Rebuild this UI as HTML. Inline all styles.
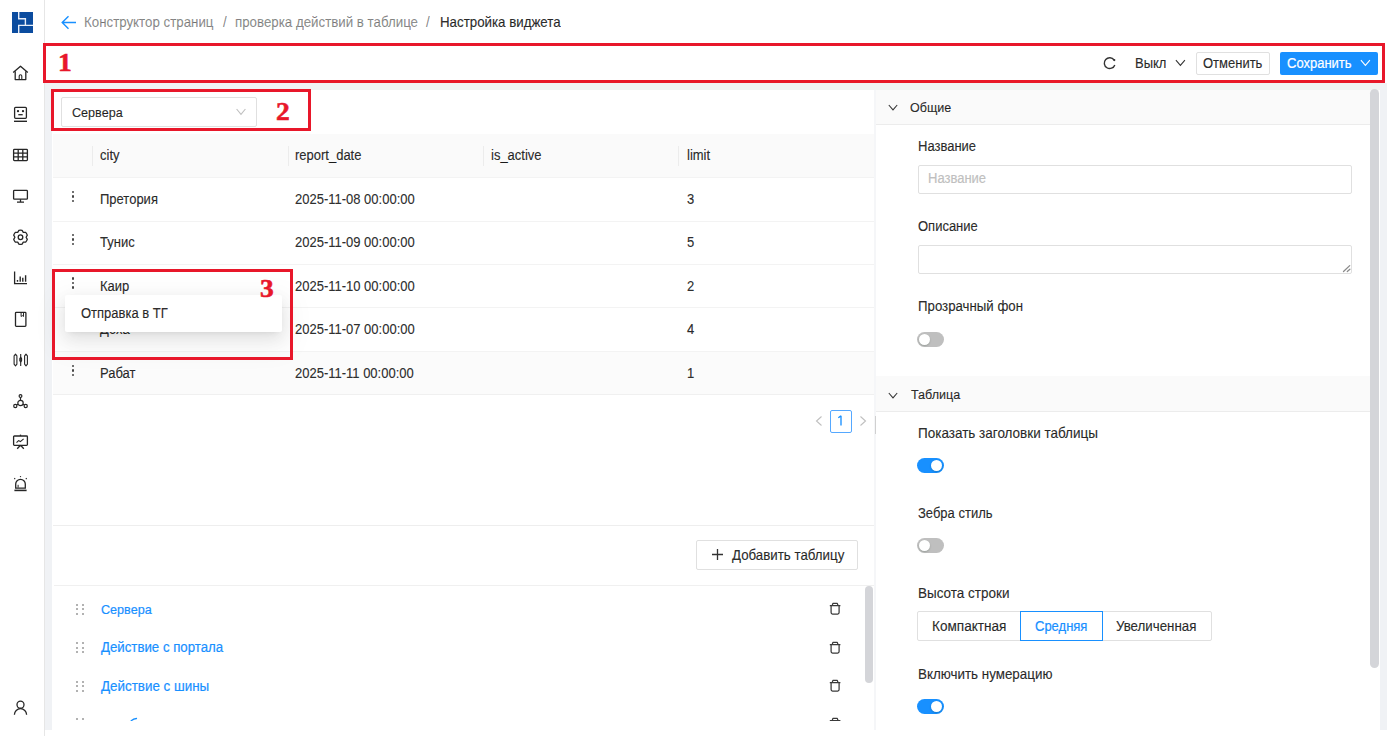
<!DOCTYPE html>
<html><head><meta charset="utf-8">
<style>
*{box-sizing:border-box;margin:0;padding:0}
html,body{width:1387px;height:736px;overflow:hidden;background:#fff;font-family:"Liberation Sans",sans-serif;font-size:13px;color:rgba(0,0,0,.83)}
.abs{position:absolute}
.t{position:absolute;white-space:nowrap;line-height:13px;font-size:13px;-webkit-text-stroke:0.2px currentColor}
.redbox{position:absolute;border:3px solid #e8172a}
.num{position:absolute;font-family:"Liberation Serif",serif;font-weight:bold;color:#e8172a;font-size:25px;line-height:25px;transform:scaleX(1.1);transform-origin:0 0;-webkit-text-stroke:0.55px #e8172a}
.dots{position:absolute;width:3px;height:12px}
.dots i{position:absolute;left:0;width:2.5px;height:2.5px;border-radius:50%;background:#444}
.sw{position:absolute;left:917px;width:26.5px;height:15px;border-radius:8px;background:#bfbfbf}
.sw i{position:absolute;top:2px;left:2px;width:11px;height:11px;border-radius:50%;background:#fff;box-shadow:0 1px 2px rgba(0,35,11,.2)}
.sw.on{background:#1890ff}
.sw.on i{left:13.5px}
</style></head><body>
<div class="abs" style="left:0;top:0;width:44px;height:736px;background:#fff"></div>
<div class="abs" style="left:44px;top:0;width:1px;height:736px;background:#e6e6e6"></div>
<svg class="abs" style="left:12px;top:12px" width="21" height="21" viewBox="0 0 21 21">
<rect x="0" y="0" width="21" height="21" fill="#0b4c9f"/>
<path d="M6.7 0V6.7H13.4V13.4H21M6.7 21V13.4H13.4" stroke="#e8eef8" stroke-width="1.4" fill="none"/></svg>
<svg class="abs" style="left:12px;top:65px" width="17" height="16" viewBox="0 0 17 16" fill="none" stroke="#262626" stroke-width="1.3" stroke-linejoin="round">
<path d="M1.2 7.6L8.5 1.2L15.8 7.6"/><path d="M3.2 6.2V14.6H13.8V6.2"/><path d="M7.2 14.6V11A1.3 1.3 0 0 1 9.8 11V14.6" stroke-width="1.1"/></svg>
<svg class="abs" style="left:13px;top:106px" width="15" height="17" viewBox="0 0 15 17" fill="none" stroke="#262626" stroke-width="1.3">
<rect x="1.6" y="1.3" width="11.8" height="11" rx="1"/><path d="M1 15.3H14" stroke-width="1.4"/><circle cx="5" cy="5.2" r=".5" fill="#262626"/><circle cx="10" cy="5.2" r=".5" fill="#262626"/><path d="M5.3 8.7H9.7"/></svg>
<svg class="abs" style="left:12px;top:148px" width="17" height="14" viewBox="0 0 17 14" fill="none" stroke="#262626" stroke-width="1.3">
<rect x="1.6" y="1.4" width="13.8" height="11.2" rx=".8"/><path d="M6.2 1.4V12.6M10.8 1.4V12.6M1.6 5.1H15.4M1.6 8.9H15.4"/></svg>
<svg class="abs" style="left:12px;top:189px" width="17" height="15" viewBox="0 0 17 15" fill="none" stroke="#262626" stroke-width="1.3">
<rect x="1.6" y="1.4" width="13.8" height="8.8" rx=".8"/><path d="M8.5 10.2V13M5 13.2H12"/></svg>
<svg class="abs" style="left:12px;top:229px" width="17" height="17" viewBox="0 0 17 17" fill="none" stroke="#262626" stroke-width="1.3" stroke-linejoin="round">
<path d="M6.90 1.33A7.10 7.10 0 0 1 10.10 1.33L11.30 3.40L13.69 3.41A7.10 7.10 0 0 1 15.29 6.17L14.10 8.25L15.29 10.33A7.10 7.10 0 0 1 13.69 13.09L11.30 13.10L10.10 15.17A7.10 7.10 0 0 1 6.90 15.17L5.70 13.10L3.31 13.09A7.10 7.10 0 0 1 1.71 10.33L2.90 8.25L1.71 6.17A7.10 7.10 0 0 1 3.31 3.41L5.70 3.40Z"/><circle cx="8.5" cy="8.25" r="2.3"/></svg>
<svg class="abs" style="left:13px;top:271px" width="15" height="14" viewBox="0 0 15 14" fill="none" stroke="#262626" stroke-width="1.3">
<path d="M1.6 0.6V12.6H14"/><path d="M4.5 10.8V9M7.2 10.8V5.6M9.8 10.8V6.8M12.6 10.8V4.2" stroke-width="1.4"/></svg>
<svg class="abs" style="left:14px;top:311px" width="13" height="17" viewBox="0 0 13 17" fill="none" stroke="#262626" stroke-width="1.3">
<rect x="1.5" y="1.3" width="10.4" height="14" rx=".8"/><path d="M7.1 1.3V5.5L8.3 4.6L9.5 5.5V1.3" stroke-width="1"/></svg>
<svg class="abs" style="left:13px;top:353px" width="16" height="14" viewBox="0 0 16 14" fill="none" stroke="#262626" stroke-width="1.1" stroke-linejoin="round">
<path d="M2.5 1.2L3.9 2.8V11.2L2.5 12.8L1.1 11.2V2.8Z"/><path d="M7.7 1V13" /><path d="M7.7 4.2L8.6 5.6V7.6L7.7 9L6.8 7.6V5.6Z"/><path d="M13 1.2L14.4 2.8V11.2L13 12.8L11.6 11.2V2.8Z"/></svg>
<svg class="abs" style="left:12px;top:393px" width="17" height="17" viewBox="0 0 17 17" fill="none" stroke="#262626" stroke-width="1.2">
<circle cx="8.5" cy="3.1" r="1.4"/><circle cx="8.5" cy="10" r="2.7"/><path d="M8.5 4.5V7.3"/><path d="M6.1 11.3L4.7 12.1M10.9 11.3L12.3 12.1"/><circle cx="3.3" cy="13" r="1.6"/><circle cx="13.7" cy="13" r="1.6"/></svg>
<svg class="abs" style="left:12px;top:434px" width="17" height="16" viewBox="0 0 17 16" fill="none" stroke="#262626" stroke-width="1.3">
<rect x="1.6" y="2" width="13.8" height="9.3" rx=".8"/><path d="M8.5 0.6V2"/><path d="M4.5 8.6L6.6 6.6L8.4 7.6L11.6 4.8" stroke-width="1.1"/><path d="M8.5 11.3L5.2 14.8M8.5 11.3L11.8 14.8"/></svg>
<svg class="abs" style="left:13px;top:475px" width="15" height="17" viewBox="0 0 15 17" fill="none" stroke="#262626" stroke-width="1.3">
<path d="M2.7 13.1V9.1A4.8 4.8 0 0 1 12.3 9.1V13.1Z"/><path d="M1.4 15.4H13.6" stroke-width="1.6"/><path d="M5.1 12.6V9.8" stroke-width="1"/><circle cx="7.5" cy="1.6" r=".7" fill="#262626" stroke="none"/><path d="M1.3 3.2L2.2 4.1M13.7 3.2L12.8 4.1" stroke-width="1.1"/></svg>
<svg class="abs" style="left:13px;top:700px" width="15" height="16" viewBox="0 0 15 16" fill="none" stroke="#262626" stroke-width="1.3">
<circle cx="7.5" cy="4.7" r="3.5"/><path d="M1.4 14.8A6.1 6.1 0 0 1 13.6 14.8"/></svg>

<svg class="abs" style="left:61px;top:15px" width="16" height="15" viewBox="0 0 16 15"><path d="M15 7.5H1.5M7.5 1.2L1.2 7.5L7.5 13.8" stroke="#1890ff" stroke-width="1.4" fill="none"/></svg>
<div class="t" style="left:83.5px;top:16.00px;font-size:14.30px;transform:scaleX(0.9302);transform-origin:0 0;color:rgba(0,0,0,.45)">Конструктор страниц</div>
<div class="t" style="left:223px;top:16.00px;font-size:14.30px;transform:scaleX(0.9302);transform-origin:0 0;color:rgba(0,0,0,.45)">/</div>
<div class="t" style="left:235px;top:16.00px;font-size:14.30px;transform:scaleX(0.9302);transform-origin:0 0;color:rgba(0,0,0,.45)">проверка действий в таблице</div>
<div class="t" style="left:426px;top:16.00px;font-size:14.30px;transform:scaleX(0.9302);transform-origin:0 0;color:rgba(0,0,0,.45)">/</div>
<div class="t" style="left:439.5px;top:16.00px;font-size:14.30px;transform:scaleX(0.9302);transform-origin:0 0;">Настройка виджета</div>
<svg class="abs" style="left:1100px;top:53px" width="20" height="20" viewBox="0 0 20 20"><path d="M14.1 7.0A5.4 5.4 0 1 0 14.8 11.9" stroke="#333" stroke-width="1.4" fill="none"/><circle cx="14.3" cy="7.1" r="1.1" fill="#333"/></svg>
<div class="t" style="left:1134.5px;top:57.00px;font-size:13.97px;transform:scaleX(0.9302);transform-origin:0 0;">Выкл</div>
<svg class="abs" style="left:1175px;top:59px" width="11" height="8" viewBox="0 0 11 8"><path d="M0.9 1.2L5.4 6.4L9.9 1.2" stroke="#333" stroke-width="1.05" fill="none"/></svg>
<div class="abs" style="left:1196px;top:52px;width:74px;height:23px;border:1px solid #e0e0e0;border-radius:2px;background:#fff"></div>
<div class="t" style="left:1203px;top:57.00px;font-size:13.97px;transform:scaleX(0.9302);transform-origin:0 0;">Отменить</div>
<div class="abs" style="left:1280px;top:52px;width:98px;height:22.5px;background:#1890ff;border-radius:2px"></div>
<div class="t" style="left:1287px;top:57.00px;font-size:13.97px;transform:scaleX(0.9302);transform-origin:0 0;color:#fff">Сохранить</div>
<svg class="abs" style="left:1360px;top:59px" width="11" height="8" viewBox="0 0 11 8"><path d="M0.9 1.2L5.4 6.4L9.9 1.2" stroke="#fff" stroke-width="1.05" fill="none"/></svg>
<div class="abs" style="left:45px;top:83px;width:1342px;height:647px;background:#f0f2f5"></div>
<div class="abs" style="left:52px;top:89.5px;width:822px;height:640.5px;background:#fff"></div>
<div class="abs" style="left:876px;top:89.5px;width:504px;height:640.5px;background:#fff"></div>
<div class="abs" style="left:61px;top:97px;width:195.5px;height:29.5px;border:1px solid #e0e0e0;border-radius:2px"></div>
<div class="t" style="left:72px;top:106.00px;font-size:13.54px;transform:scaleX(0.9302);transform-origin:0 0;">Сервера</div>
<svg class="abs" style="left:235.5px;top:107.5px" width="10" height="8" viewBox="0 0 10 8"><path d="M0.6 1L5 6.3L9.4 1" stroke="#bfbfbf" stroke-width="1.1" fill="none"/></svg>
<div class="abs" style="left:53px;top:133.6px;width:821px;height:43.6px;background:#fafafa"></div>
<div class="abs" style="left:92px;top:145.5px;width:1px;height:20px;background:#ececec"></div>
<div class="abs" style="left:287.5px;top:145.5px;width:1px;height:20px;background:#ececec"></div>
<div class="abs" style="left:483px;top:145.5px;width:1px;height:20px;background:#ececec"></div>
<div class="abs" style="left:678px;top:145.5px;width:1px;height:20px;background:#ececec"></div>
<div class="t" style="left:100px;top:149.00px;font-size:13.97px;transform:scaleX(0.9302);transform-origin:0 0;">city</div>
<div class="t" style="left:295px;top:149.00px;font-size:13.97px;transform:scaleX(0.9302);transform-origin:0 0;">report_date</div>
<div class="t" style="left:491px;top:149.00px;font-size:13.97px;transform:scaleX(0.9302);transform-origin:0 0;">is_active</div>
<div class="t" style="left:687px;top:149.00px;font-size:13.97px;transform:scaleX(0.9302);transform-origin:0 0;">limit</div>
<div class="abs" style="left:53px;top:177.2px;width:821px;height:1px;background:#f3f3f3"></div>
<div class="abs dots" style="left:71.5px;top:190.5px"><i style="top:0"></i><i style="top:4.5px"></i><i style="top:9px"></i></div>
<div class="t" style="left:100px;top:193.00px;font-size:13.97px;transform:scaleX(0.9302);transform-origin:0 0;">Претория</div>
<div class="t" style="left:295px;top:193.00px;font-size:13.97px;transform:scaleX(0.9302);transform-origin:0 0;">2025-11-08 00:00:00</div>
<div class="t" style="left:687px;top:193.00px;font-size:13.97px;transform:scaleX(0.9302);transform-origin:0 0;">3</div>
<div class="abs" style="left:53px;top:220.6px;width:821px;height:1px;background:#f3f3f3"></div>
<div class="abs dots" style="left:71.5px;top:233.9px"><i style="top:0"></i><i style="top:4.5px"></i><i style="top:9px"></i></div>
<div class="t" style="left:100px;top:236.00px;font-size:13.97px;transform:scaleX(0.9302);transform-origin:0 0;">Тунис</div>
<div class="t" style="left:295px;top:236.00px;font-size:13.97px;transform:scaleX(0.9302);transform-origin:0 0;">2025-11-09 00:00:00</div>
<div class="t" style="left:687px;top:236.00px;font-size:13.97px;transform:scaleX(0.9302);transform-origin:0 0;">5</div>
<div class="abs" style="left:53px;top:264.0px;width:821px;height:1px;background:#f3f3f3"></div>
<div class="abs dots" style="left:71.5px;top:277.3px"><i style="top:0"></i><i style="top:4.5px"></i><i style="top:9px"></i></div>
<div class="t" style="left:100px;top:280.00px;font-size:13.97px;transform:scaleX(0.9302);transform-origin:0 0;">Каир</div>
<div class="t" style="left:295px;top:280.00px;font-size:13.97px;transform:scaleX(0.9302);transform-origin:0 0;">2025-11-10 00:00:00</div>
<div class="t" style="left:687px;top:280.00px;font-size:13.97px;transform:scaleX(0.9302);transform-origin:0 0;">2</div>
<div class="abs" style="left:53px;top:307.4px;width:821px;height:1px;background:#f3f3f3"></div>
<div class="abs dots" style="left:71.5px;top:320.7px"><i style="top:0"></i><i style="top:4.5px"></i><i style="top:9px"></i></div>
<div class="t" style="left:100px;top:323.00px;font-size:13.97px;transform:scaleX(0.9302);transform-origin:0 0;">Доха</div>
<div class="t" style="left:295px;top:323.00px;font-size:13.97px;transform:scaleX(0.9302);transform-origin:0 0;">2025-11-07 00:00:00</div>
<div class="t" style="left:687px;top:323.00px;font-size:13.97px;transform:scaleX(0.9302);transform-origin:0 0;">4</div>
<div class="abs" style="left:53px;top:351.8px;width:821px;height:43.4px;background:#fbfbfb"></div>
<div class="abs" style="left:53px;top:350.8px;width:821px;height:1px;background:#f3f3f3"></div>
<div class="abs dots" style="left:71.5px;top:364.7px"><i style="top:0"></i><i style="top:4.5px"></i><i style="top:9px"></i></div>
<div class="t" style="left:100px;top:367.00px;font-size:13.97px;transform:scaleX(0.9302);transform-origin:0 0;">Рабат</div>
<div class="t" style="left:295px;top:367.00px;font-size:13.97px;transform:scaleX(0.9302);transform-origin:0 0;">2025-11-11 00:00:00</div>
<div class="t" style="left:687px;top:367.00px;font-size:13.97px;transform:scaleX(0.9302);transform-origin:0 0;">1</div>
<div class="abs" style="left:53px;top:394.2px;width:821px;height:1px;background:#f0f0f0"></div>
<svg class="abs" style="left:814.5px;top:415.5px" width="8" height="10" viewBox="0 0 8 10"><path d="M6.5 0.5L1.5 5L6.5 9.5" stroke="#bfbfbf" stroke-width="1.1" fill="none"/></svg>
<div class="abs" style="left:829.5px;top:410px;width:22.5px;height:22.5px;border:1px solid #55a8ff;border-radius:2px"></div>
<svg class="abs" style="left:836px;top:415px" width="8" height="11" viewBox="0 0 8 11"><path d="M5 0.8V10.4M5 0.9L2.3 2.8" stroke="#1890ff" stroke-width="1.35" fill="none"/></svg>
<svg class="abs" style="left:858.8px;top:415.5px" width="8" height="10" viewBox="0 0 8 10"><path d="M1.5 0.5L6.5 5L1.5 9.5" stroke="#bfbfbf" stroke-width="1.1" fill="none"/></svg>
<div class="abs" style="left:874px;top:89.5px;width:2px;height:640.5px;background:#f5f6f8"></div>
<div class="abs" style="left:874.5px;top:415.5px;width:1.5px;height:18.5px;background:#d0d0d0"></div>
<div class="abs" style="left:53px;top:525px;width:821px;height:1.2px;background:#eeeeee"></div>
<div class="abs" style="left:696px;top:540px;width:162px;height:29.5px;border:1px solid #e0e0e0;border-radius:2px"></div>
<svg class="abs" style="left:712px;top:549px" width="11" height="11" viewBox="0 0 11 11"><path d="M5.5 0V11M0 5.5H11" stroke="#333" stroke-width="1.3"/></svg>
<div class="t" style="left:731.5px;top:549.00px;font-size:14.30px;transform:scaleX(0.9302);transform-origin:0 0;">Добавить таблицу</div>
<div class="abs" style="left:54px;top:585px;width:820px;height:1px;background:#f0f0f0"></div>
<div class="abs" style="left:52px;top:586px;width:812px;height:135px;overflow:hidden">
<div class="abs" style="left:23.5px;top:17.5px;width:9px;height:12px">
<i class="abs" style="left:0px;top:0px;width:2.2px;height:2.2px;border-radius:1px;background:#999"></i>
<i class="abs" style="left:0px;top:4.5px;width:2.2px;height:2.2px;border-radius:1px;background:#999"></i>
<i class="abs" style="left:0px;top:9px;width:2.2px;height:2.2px;border-radius:1px;background:#999"></i>
<i class="abs" style="left:6px;top:0px;width:2.2px;height:2.2px;border-radius:1px;background:#999"></i>
<i class="abs" style="left:6px;top:4.5px;width:2.2px;height:2.2px;border-radius:1px;background:#999"></i>
<i class="abs" style="left:6px;top:9px;width:2.2px;height:2.2px;border-radius:1px;background:#999"></i>
</div>
<div class="t" style="left:48.5px;top:17.00px;font-size:13.54px;transform:scaleX(0.9302);transform-origin:0 0;color:#1890ff">Сервера</div>
<svg class="abs" style="left:777px;top:16.0px" width="13" height="14" viewBox="0 0 13 14"><path d="M0.8 3.5H11.4M3.2 3.5L3.9 1.4H8.3L9 3.5M2.1 3.8V10.6A1.4 1.4 0 0 0 3.5 12H8.7A1.4 1.4 0 0 0 10.1 10.6V3.8" stroke="#3a3a3a" stroke-width="1.25" fill="none" stroke-linejoin="round"/></svg>
<div class="abs" style="left:23.5px;top:56.0px;width:9px;height:12px">
<i class="abs" style="left:0px;top:0px;width:2.2px;height:2.2px;border-radius:1px;background:#999"></i>
<i class="abs" style="left:0px;top:4.5px;width:2.2px;height:2.2px;border-radius:1px;background:#999"></i>
<i class="abs" style="left:0px;top:9px;width:2.2px;height:2.2px;border-radius:1px;background:#999"></i>
<i class="abs" style="left:6px;top:0px;width:2.2px;height:2.2px;border-radius:1px;background:#999"></i>
<i class="abs" style="left:6px;top:4.5px;width:2.2px;height:2.2px;border-radius:1px;background:#999"></i>
<i class="abs" style="left:6px;top:9px;width:2.2px;height:2.2px;border-radius:1px;background:#999"></i>
</div>
<div class="t" style="left:48.5px;top:55.00px;font-size:14.24px;transform:scaleX(0.9302);transform-origin:0 0;color:#1890ff">Действие с портала</div>
<svg class="abs" style="left:777px;top:54.5px" width="13" height="14" viewBox="0 0 13 14"><path d="M0.8 3.5H11.4M3.2 3.5L3.9 1.4H8.3L9 3.5M2.1 3.8V10.6A1.4 1.4 0 0 0 3.5 12H8.7A1.4 1.4 0 0 0 10.1 10.6V3.8" stroke="#3a3a3a" stroke-width="1.25" fill="none" stroke-linejoin="round"/></svg>
<div class="abs" style="left:23.5px;top:94.5px;width:9px;height:12px">
<i class="abs" style="left:0px;top:0px;width:2.2px;height:2.2px;border-radius:1px;background:#999"></i>
<i class="abs" style="left:0px;top:4.5px;width:2.2px;height:2.2px;border-radius:1px;background:#999"></i>
<i class="abs" style="left:0px;top:9px;width:2.2px;height:2.2px;border-radius:1px;background:#999"></i>
<i class="abs" style="left:6px;top:0px;width:2.2px;height:2.2px;border-radius:1px;background:#999"></i>
<i class="abs" style="left:6px;top:4.5px;width:2.2px;height:2.2px;border-radius:1px;background:#999"></i>
<i class="abs" style="left:6px;top:9px;width:2.2px;height:2.2px;border-radius:1px;background:#999"></i>
</div>
<div class="t" style="left:48.5px;top:94.00px;font-size:14.40px;transform:scaleX(0.9302);transform-origin:0 0;color:#1890ff">Действие с шины</div>
<svg class="abs" style="left:777px;top:93.0px" width="13" height="14" viewBox="0 0 13 14"><path d="M0.8 3.5H11.4M3.2 3.5L3.9 1.4H8.3L9 3.5M2.1 3.8V10.6A1.4 1.4 0 0 0 3.5 12H8.7A1.4 1.4 0 0 0 10.1 10.6V3.8" stroke="#3a3a3a" stroke-width="1.25" fill="none" stroke-linejoin="round"/></svg>
<div class="abs" style="left:23.5px;top:132.0px;width:9px;height:12px">
<i class="abs" style="left:0px;top:0px;width:2.2px;height:2.2px;border-radius:1px;background:#999"></i>
<i class="abs" style="left:0px;top:4.5px;width:2.2px;height:2.2px;border-radius:1px;background:#999"></i>
<i class="abs" style="left:0px;top:9px;width:2.2px;height:2.2px;border-radius:1px;background:#999"></i>
<i class="abs" style="left:6px;top:0px;width:2.2px;height:2.2px;border-radius:1px;background:#999"></i>
<i class="abs" style="left:6px;top:4.5px;width:2.2px;height:2.2px;border-radius:1px;background:#999"></i>
<i class="abs" style="left:6px;top:9px;width:2.2px;height:2.2px;border-radius:1px;background:#999"></i>
</div>
<svg class="abs" style="left:78px;top:131px" width="8" height="5" viewBox="0 0 8 5"><path d="M1.2 3.8Q3.5 1.8 6.5 1.5" stroke="#1890ff" stroke-width="1.3" fill="none" stroke-linecap="round"/></svg>
<svg class="abs" style="left:777px;top:130.5px" width="13" height="14" viewBox="0 0 13 14"><path d="M0.8 3.5H11.4M3.2 3.5L3.9 1.4H8.3L9 3.5M2.1 3.8V10.6A1.4 1.4 0 0 0 3.5 12H8.7A1.4 1.4 0 0 0 10.1 10.6V3.8" stroke="#3a3a3a" stroke-width="1.25" fill="none" stroke-linejoin="round"/></svg>
</div>
<div class="abs" style="left:864.5px;top:586px;width:8.5px;height:97px;border-radius:4.5px;background:#d4d5d9"></div>
<div class="abs" style="left:876px;top:89.5px;width:494px;height:35px;background:#fafafa;border-bottom:1px solid #ececec"></div>
<svg class="abs" style="left:888px;top:104px" width="10" height="7" viewBox="0 0 10 7"><path d="M0.8 1L5 5.9L9.2 1" stroke="#333" stroke-width="1.05" fill="none"/></svg>
<div class="t" style="left:910px;top:101.00px;font-size:13.44px;transform:scaleX(0.9302);transform-origin:0 0;">Общие</div>
<div class="t" style="left:917.5px;top:140.00px;font-size:13.97px;transform:scaleX(0.9302);transform-origin:0 0;">Название</div>
<div class="abs" style="left:917.5px;top:164.5px;width:434px;height:29px;border:1px solid #e0e0e0;border-radius:2px"></div>
<div class="t" style="left:927.5px;top:172.00px;font-size:13.97px;transform:scaleX(0.9302);transform-origin:0 0;color:#bfbfbf">Название</div>
<div class="t" style="left:917.5px;top:220.00px;font-size:13.97px;transform:scaleX(0.9302);transform-origin:0 0;">Описание</div>
<div class="abs" style="left:917.5px;top:244.5px;width:434px;height:29.5px;border:1px solid #e0e0e0;border-radius:2px"></div>
<svg class="abs" style="left:1342px;top:264px" width="9" height="9" viewBox="0 0 9 9"><path d="M1.5 7.5L7.7 1.6M5.3 7.5L7.9 5.2" stroke="#8a8a8a" stroke-width="1.3" stroke-linecap="round"/></svg>
<div class="t" style="left:917.5px;top:300.00px;font-size:14.24px;transform:scaleX(0.9302);transform-origin:0 0;">Прозрачный фон</div>
<div class="sw" style="top:331.5px"><i></i></div>
<div class="abs" style="left:876px;top:376px;width:494px;height:35.5px;background:#fafafa;border-bottom:1px solid #ececec"></div>
<svg class="abs" style="left:888px;top:392px" width="10" height="7" viewBox="0 0 10 7"><path d="M0.8 1L5 5.9L9.2 1" stroke="#333" stroke-width="1.05" fill="none"/></svg>
<div class="t" style="left:910.5px;top:388.00px;font-size:13.49px;transform:scaleX(0.9302);transform-origin:0 0;">Таблица</div>
<div class="t" style="left:917.5px;top:427.00px;font-size:14.51px;transform:scaleX(0.9302);transform-origin:0 0;">Показать заголовки таблицы</div>
<div class="sw on" style="top:458px"><i></i></div>
<div class="t" style="left:917.5px;top:507.00px;font-size:13.97px;transform:scaleX(0.9302);transform-origin:0 0;">Зебра стиль</div>
<div class="sw" style="top:538px"><i></i></div>
<div class="t" style="left:917.5px;top:587.00px;font-size:14.51px;transform:scaleX(0.9302);transform-origin:0 0;">Высота строки</div>
<div class="abs" style="left:917px;top:611px;width:294.5px;height:30px;border:1px solid #e0e0e0;border-radius:2px"></div>
<div class="abs" style="left:1020px;top:611px;width:1px;height:30px;background:#e0e0e0"></div>
<div class="abs" style="left:1020px;top:611px;width:83px;height:30px;border:1px solid #1890ff"></div>
<div class="t" style="left:932px;top:620.00px;font-size:14.62px;transform:scaleX(0.9302);transform-origin:0 0;">Компактная</div>
<div class="t" style="left:1035px;top:620.00px;font-size:13.97px;transform:scaleX(0.9302);transform-origin:0 0;color:#1890ff">Средняя</div>
<div class="t" style="left:1116px;top:620.00px;font-size:14.30px;transform:scaleX(0.9302);transform-origin:0 0;">Увеличенная</div>
<div class="t" style="left:917.5px;top:668.00px;font-size:14.40px;transform:scaleX(0.9302);transform-origin:0 0;">Включить нумерацию</div>
<div class="sw on" style="top:698.5px"><i></i></div>
<div class="abs" style="left:1370px;top:89px;width:9px;height:578.5px;border-radius:4.5px;background:#d4d5d9"></div>
<div class="abs" style="left:65px;top:295px;width:216.5px;height:36.5px;background:#fff;border-radius:2px;box-shadow:0 3px 6px -4px rgba(0,0,0,.12),0 6px 16px 0 rgba(0,0,0,.08),0 9px 28px 8px rgba(0,0,0,.05)"></div>
<div class="t" style="left:80.5px;top:307.00px;font-size:13.97px;transform:scaleX(0.9302);transform-origin:0 0;">Отправка в ТГ</div>
<div class="redbox" style="left:43px;top:43px;width:1342px;height:40px"></div>
<div class="num" style="left:58px;top:50px">1</div>
<div class="redbox" style="left:51px;top:89px;width:260px;height:42px"></div>
<div class="num" style="left:276px;top:99px">2</div>
<div class="redbox" style="left:52px;top:269px;width:241px;height:91px"></div>
<div class="num" style="left:260px;top:276px">3</div>
</body></html>
